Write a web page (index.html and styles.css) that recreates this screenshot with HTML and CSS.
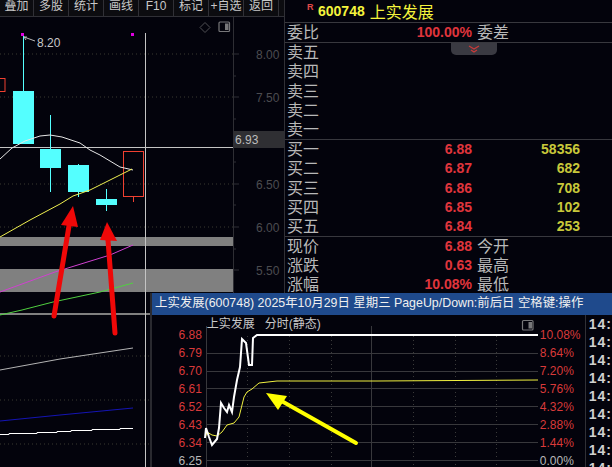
FILE: index.html
```html
<html>
    <head>
        <meta charset="utf-8">
        <link rel="stylesheet" href="styles.css">
    </head>
    <body>
        <div class="app">
            <div class="left">
                <div class="toolbar">
                    <span class="tool">叠加</span>
                    <span class="tool">多股</span>
                    <span class="tool">统计</span>
                    <span class="tool">画线</span>
                    <span class="tool">F10</span>
                    <span class="tool">标记</span>
                    <span class="tool">+自选</span>
                    <span class="tool">返回</span>
                </div>
                <svg class="kline" width="285" height="450" viewBox="0 17 285 450">
                    <!-- dotted price grid -->
                    <g class="dots">
                        <line x1="0" x2="233" y1="54" y2="54"/>
                        <line x1="0" x2="233" y1="97" y2="97"/>
                        <line x1="0" x2="233" y1="184" y2="184"/>
                        <line x1="0" x2="233" y1="227" y2="227"/>
                        <line x1="0" x2="233" y1="356" y2="356"/>
                        <line x1="0" x2="233" y1="400" y2="400"/>
                        <line x1="0" x2="233" y1="444" y2="444"/>
                    </g>
                    <!-- grey bands -->
                    <rect class="band" x="0" y="237" width="233" height="9"/>
                    <rect class="band" x="0" y="269" width="233" height="23"/>
                    <rect class="band" x="0" y="313" width="150" height="2"/>

                    <line class="cross" x1="145.5" x2="145.5" y1="33" y2="467"/>
                    <line class="cross" x1="0" x2="233" y1="147.5" y2="147.5"/>

                    <!-- axis -->
                    <line class="axis" x1="233.5" x2="233.5" y1="17" y2="293"/>
                    <path class="axis" d="M233 54h6M233 76h3M233 97h6M233 119h3M233 162h3M233 184h6M233 205h3M233 227h6M233 249h3M233 270h6"/>
                    <text class="axis_text" x="256" y="59">8.00</text>
                    <text class="axis_text" x="256" y="102">7.50</text>
                    <text class="axis_text" x="256" y="189">6.50</text>
                    <text class="axis_text" x="256" y="232">6.00</text>
                    <text class="axis_text" x="256" y="275">5.50</text>
                    <rect class="tag" x="234" y="131" width="50" height="17"/>
                    <text class="tag_text" x="235" y="144">6.93</text>

                    <!-- candles -->
                    <g class="candle">
                        <path d="M23.5 35V91M50.5 115V192M78.5 164V197M106.5 189V211" />
                        <rect x="13" y="91" width="21" height="53"/>
                        <rect x="40" y="149" width="21" height="19"/>
                        <rect x="68" y="165" width="21" height="27"/>
                        <rect x="96" y="199" width="21" height="6"/>
                    </g>
                    <g class="candle_up">
                        <rect x="-10" y="78.5" width="15" height="13"/>
                        <rect x="123.5" y="151.5" width="20" height="45"/>
                        <path d="M133.5 197V202"/>
                    </g>
                    <rect class="mark" x="21" y="33" width="3" height="3"/>
                    <rect class="mark" x="131" y="33" width="3" height="3"/>
                    <path class="leader" d="M24 37L35 41M24 37l3 0M24 37l2 3"/>
                    <text class="high_text" x="37" y="47">8.20</text>

                    <!-- averages -->
                    <polyline class="ma white" points="0,159 12,148 25,141 40,136 50,135 62,137 80,143 90,150 100,155 120,167 133,170"/>
                    <polyline class="ma yellow" points="0,237 30,220 60,204 73,196 90,190 110,180 132,169"/>
                    <polyline class="ma magenta" points="0,292 55,272 110,255 133,245"/>
                    <polyline class="ma green" points="0,315 22,310 53,302 100,292 133,283"/>
                    <polyline class="ma silver" points="0,370 60,359 133,348"/>
                    <polyline class="ma blue" points="0,421 60,415 133,408"/>
                    <polyline class="ma bright" points="0,434.5 9,434.5 9,433.5 37,433.5 37,432.5 57,432.5 57,431.5 71,431.5 71,430.5 92,430.5 92,429.5 120,429.5 120,428.5 133,428.5"/>

                    <!-- drawn arrows -->
                    <g class="red_arrow">
                        <line x1="54" y1="316" x2="69" y2="226"/>
                        <polygon points="73,206 61,225 78,227"/>
                        <line x1="115" y1="333" x2="108" y2="240"/>
                        <polygon points="107,222 100,240 117,241"/>
                    </g>

                    <!-- chart icons -->
                    <path class="icon_line" d="M205 22.5l5 5-5 5-5-5z"/>
                    <rect class="icon_box" x="219" y="22" width="10.5" height="9.5" rx="1"/>
                    <rect class="icon_fill" x="225" y="23.5" width="3.5" height="6.5"/>
                </svg>
            </div>

            <div class="book">
                <div class="book_head">
                    <span class="flag">R</span>
                    <span class="code">600748</span>
                    <span class="stock">上实发展</span>
                </div>
                <div class="row row_ratio">
                    <span>委比</span><span class="price">100.00%</span><span class="side">委差</span>
                </div>
                <div class="handle">
                    <svg width="12" height="8" viewBox="0 0 12 8"><path class="chevron" d="M1 1l5 3 5-3M3 5l3 2 3-2"/></svg>
                </div>
                <div class="group">
                    <div class="row"><span>卖五</span></div>
                    <div class="row"><span>卖四</span></div>
                    <div class="row"><span>卖三</span></div>
                    <div class="row"><span>卖二</span></div>
                    <div class="row"><span>卖一</span></div>
                </div>
                <div class="group">
                    <div class="row"><span>买一</span><span class="price">6.88</span><span class="vol">58356</span></div>
                    <div class="row"><span>买二</span><span class="price">6.87</span><span class="vol">682</span></div>
                    <div class="row"><span>买三</span><span class="price">6.86</span><span class="vol">708</span></div>
                    <div class="row"><span>买四</span><span class="price">6.85</span><span class="vol">102</span></div>
                    <div class="row"><span>买五</span><span class="price">6.84</span><span class="vol">253</span></div>
                </div>
                <div class="group">
                    <div class="row"><span>现价</span><span class="price">6.88</span><span class="side">今开</span></div>
                    <div class="row"><span>涨跌</span><span class="price">0.63</span><span class="side">最高</span></div>
                    <div class="row"><span>涨幅</span><span class="price">10.08%</span><span class="side">最低</span></div>
                </div>
            </div>

            <div class="popup">
                <div class="popup_title">上实发展(600748) 2025年10月29日 星期三 PageUp/Down:前后日 空格键:操作</div>
                <div class="popup_body">
                    <div class="scale scale_left">
                        <span>6.88</span><span>6.79</span><span>6.70</span><span>6.61</span>
                        <span>6.52</span><span>6.43</span><span>6.34</span><span class="flat">6.25</span>
                    </div>
                    <div class="mins">
                        <div class="mins_head">上实发展&nbsp;&nbsp;&nbsp;分时(静态)</div>
                        <svg class="mins_chart" width="333" height="142" viewBox="207 326 333 142">
                            <g class="grid">
                                <path d="M207.5 326V468M372.5 326V468"/>
                                <path d="M207 353.5H539M207 371.5H539M207 388.5H539M207 406.5H539M207 424.5H539M207 442.5H539M207 460.5H539"/>
                            </g>
                            <g class="grid_dots">
                                <path d="M248.5 336V468M290.5 336V468M332.5 336V468M414.5 336V468M456.5 336V468M497.5 336V468"/>
                            </g>
                            <polyline class="avg" points="206,438 208,432 213,435 218,436 223,432 228,425 235,423 240,417 245,397 248,392 253,389 260,383 278,381 378,381 539,380"/>
                            <polyline class="now" points="206,438 207,428 210,437 213,445 218,439 220,428 222,403 225,408 228,412 230,405 233,412 235,397 238,380 241,367 243,339 247,343 250,365 253,365 254,338 258,335 539,335"/>
                            <line class="yellow_arrow" x1="357" y1="443" x2="279" y2="399"/>
                            <polygon class="yellow_head" points="267,393 288,396 279,410"/>
                            <rect class="icon_box" x="523.5" y="320.5" width="10.5" height="9.5" rx="1"/>
                            <rect class="icon_fill" x="529.5" y="322" width="3.5" height="6.5"/>
                        </svg>
                    </div>
                    <div class="scale scale_right">
                        <span>10.08%</span><span>8.64%</span><span>7.20%</span><span>5.76%</span>
                        <span>4.32%</span><span>2.88%</span><span>1.44%</span><span class="flat">0.00%</span>
                    </div>
                    <div class="ticks">
                        <span>14:</span><span>14:</span><span>14:</span><span>14:</span><span>14:</span>
                        <span>14:</span><span>14:</span><span>14:</span><span>14:</span>
                    </div>
                </div>
            </div>
        </div>
    </body>
</html>
```

FILE: styles.css
```css
body {
    margin: 0;
    background-color: #03030c;
    font-family: "Liberation Sans", "Noto Sans CJK SC", sans-serif;
}

.app {
    display: flex;
    position: relative;
    width: 612px;
    height: 467px;
    overflow: hidden;
    background-color: #03030c;
}

/* left side, toolbar and k-line */
.left {
    width: 284px;
    flex-shrink: 0;
}

.toolbar {
    display: flex;
    height: 16px;
    border-bottom: 1px solid #303036;
    background-color: #0c0c10;
}

.tool {
    width: 35px;
    flex-shrink: 0;
    box-sizing: border-box;
    border-right: 1px solid #303036;
    color: #c8c8c8;
    font-size: 12px;
    line-height: 13px;
    text-align: center;
    white-space: nowrap;
}

.tool:first-child {
    width: 34px;
}

.kline {
    display: block;
}

.dots line {
    stroke: #3a3a30;
    stroke-dasharray: 1 3;
}

.band {
    fill: #808080;
}

.cross {
    stroke: #c4c4c4;
    stroke-width: 1;
}

.axis {
    stroke: #2e2e34;
    fill: none;
}

.axis_text {
    fill: #4c4c50;
    font-size: 12px;
}

.tag {
    fill: #2f2f33;
}

.tag_text {
    fill: #bdbdbd;
    font-size: 12px;
}

.candle path {
    stroke: #54ffff;
    fill: none;
}

.candle rect {
    fill: #54ffff;
}

.candle_up rect, .candle_up path {
    stroke: #f04030;
    fill: none;
}

.mark {
    fill: #e000e0;
}

.leader {
    stroke: #b8b8b8;
    fill: none;
}

.high_text {
    fill: #c8c8c8;
    font-size: 12px;
}

.ma {
    fill: none;
    stroke-width: 1;
}

.white { stroke: #e6e6e6; }
.yellow { stroke: #f0f050; }
.magenta { stroke: #d040d0; }
.green { stroke: #50d040; }
.silver { stroke: #b4b4b4; }
.blue { stroke: #1414b4; }
.bright { stroke: #ffffff; }

.red_arrow line {
    stroke: #f00808;
    stroke-width: 5;
    stroke-linecap: round;
}

.red_arrow polygon {
    fill: #f00808;
}

.icon_line {
    stroke: #505054;
    fill: none;
}

.icon_box {
    stroke: #77777a;
    fill: none;
    stroke-width: 1.2;
}

.icon_fill {
    fill: #77777a;
}

/* order book */
.book {
    width: 328px;
    flex-shrink: 0;
    border-left: 1px solid #303036;
    position: relative;
}

.book_head {
    display: flex;
    align-items: center;
    height: 22px;
    padding-left: 22px;
    border-bottom: 1px solid #38383e;
    box-sizing: content-box;
}

.flag {
    width: 11px;
    margin-top: -8px;
    color: #e04a4a;
    font-size: 9px;
    font-weight: bold;
}

.code {
    color: #f4f43c;
    font-size: 14px;
    font-weight: bold;
}

.stock {
    margin-left: 5px;
    color: #f4f43c;
    font-size: 16px;
}

.row {
    display: grid;
    grid-template-columns: 36px 149px 108px;
    height: 19.2px;
    padding-left: 2px;
    color: #b8b8b8;
    font-size: 16px;
    line-height: 19px;
}

.row_ratio {
    border-bottom: 1px solid #38383e;
}

.group {
    border-bottom: 1px solid #38383e;
}

.price {
    color: #e0353c;
    font-size: 14px;
    font-weight: bold;
    text-align: right;
    white-space: nowrap;
}

.side {
    padding-left: 5px;
}

.vol {
    color: #c8c83a;
    font-size: 14px;
    font-weight: bold;
    text-align: right;
}

.handle {
    position: absolute;
    left: 166px;
    top: 43px;
    width: 46px;
    height: 12px;
    border-radius: 0 0 5px 5px;
    background-color: #3a3a42;
    text-align: center;
}

.handle svg {
    display: block;
    margin: 2px auto 0;
}

.chevron {
    stroke: #c83a3a;
    stroke-width: 1.3;
    fill: none;
}

/* popup window */
.popup {
    position: absolute;
    left: 150px;
    top: 293px;
    width: 462px;
    height: 174px;
    background-color: #03030c;
    border-left: 2px solid #2a2a30;
    box-sizing: border-box;
}

.popup_title {
    height: 22px;
    padding-left: 3px;
    background-color: #1f4a8c;
    color: #f0f0f0;
    font-size: 12.4px;
    line-height: 21px;
    white-space: nowrap;
}

.popup_body {
    display: flex;
}

.scale {
    display: flex;
    flex-direction: column;
    padding-top: 11px;
    font-size: 12px;
    color: #d83a3a;
}

.scale span {
    height: 18px;
    line-height: 18px;
}

.scale .flat {
    color: #b8b8b8;
}

.scale_left {
    width: 55px;
    box-sizing: border-box;
    padding-right: 4px;
    text-align: right;
}

.scale_right {
    width: 48px;
    box-sizing: border-box;
    padding-left: 1px;
    border-right: 1px solid #303036;
}

.mins {
    width: 333px;
    flex-shrink: 0;
}

.mins_head {
    height: 11px;
    padding-left: 1px;
    color: #c8c8c8;
    font-size: 12px;
    line-height: 18px;
    white-space: nowrap;
    position: relative;
}

.mins_chart {
    display: block;
    overflow: visible;
}

.grid path {
    stroke: #38383c;
    fill: none;
}

.grid_dots path {
    stroke: #3a3a3a;
    stroke-dasharray: 1 3;
    fill: none;
}

.avg {
    fill: none;
    stroke: #f0f040;
    stroke-width: 1;
}

.now {
    fill: none;
    stroke: #ffffff;
    stroke-width: 2;
}

.yellow_arrow {
    stroke: #ffff00;
    stroke-width: 4;
    stroke-linecap: round;
}

.yellow_head {
    fill: #ffff00;
}

.ticks {
    display: flex;
    flex-direction: column;
    padding: 0 0 0 3px;
    color: #d0d0d0;
    font-size: 14px;
    font-weight: bold;
    letter-spacing: 1px;
}

.ticks span {
    height: 18px;
    line-height: 18px;
}
```
